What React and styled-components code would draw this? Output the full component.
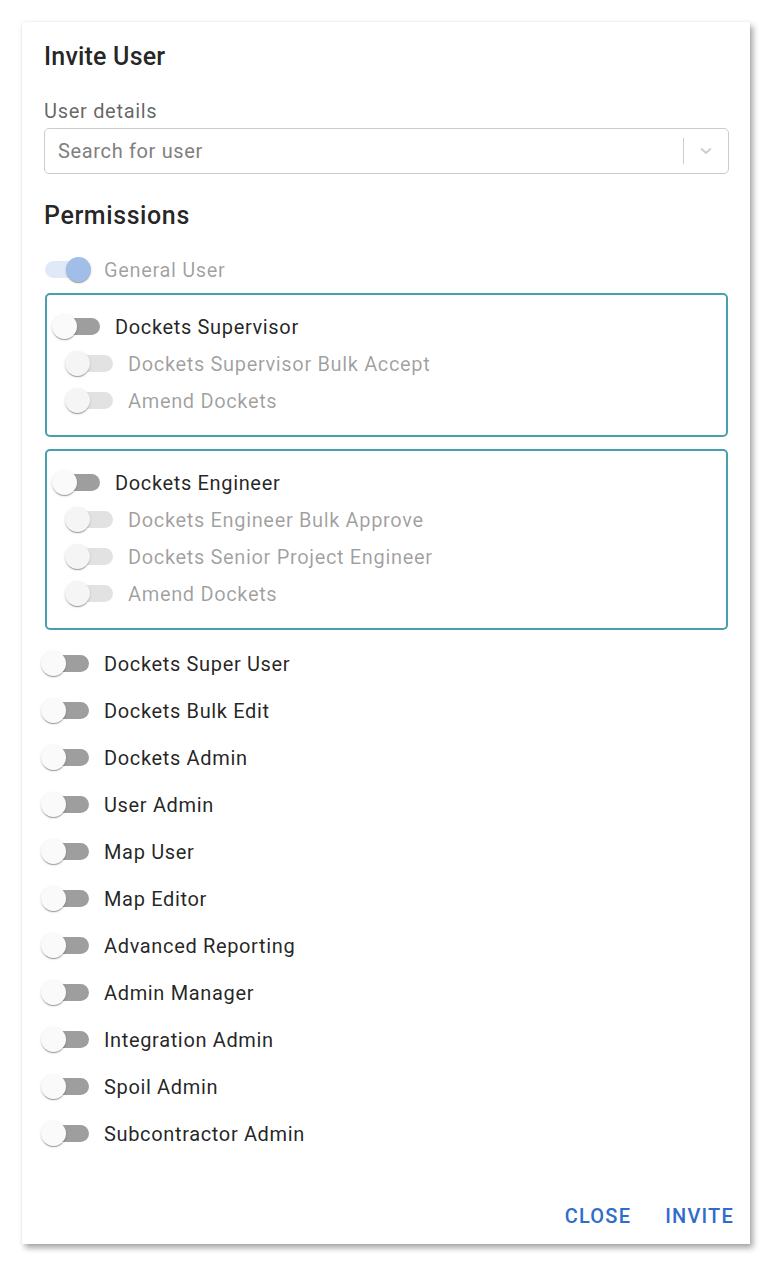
import React from 'react';
import styled, { createGlobalStyle } from 'styled-components';

// ----- style -----

const GlobalStyle = createGlobalStyle`
    body {
        margin: 0;
        background: #ffffff;
        font-family: Roboto, "Liberation Sans", Arial, sans-serif;
    }
`

const Page = styled.div`
    width: 782px;
    height: 1268px;
    padding: 22px 0 0 22px;
    box-sizing: border-box;
`
const Card = styled.div`
    width: 728px;
    height: 1222px;
    background: #ffffff;
    box-sizing: border-box;
    padding: 19px 21px 0 22px;
    display: flex;
    flex-direction: column;
    box-shadow: 0 0 2px rgba(0, 0, 0, 0.08), 3px 4px 6px rgba(0, 0, 0, 0.35);
`
const Title = styled.h2`
    margin: 0;
    font-size: 25px;
    line-height: 32px;
    font-weight: 500;
    letter-spacing: 0.2px;
    color: rgba(0, 0, 0, 0.87);
`
const FieldLabel = styled.div`
    margin-top: 26px;
    font-size: 20px;
    line-height: 24px;
    letter-spacing: 0.7px;
    color: rgba(0, 0, 0, 0.62);
`
const Select = styled.div`
    margin-top: 5px;
    height: 46px;
    box-sizing: border-box;
    border: 1px solid #cccccc;
    border-radius: 5px;
    display: flex;
    align-items: center;
`
const Placeholder = styled.div`
    flex: 1;
    padding-left: 13px;
    font-size: 20px;
    letter-spacing: 0.65px;
    color: #808080;
`
const Separator = styled.div`
    width: 1px;
    height: 26px;
    background: #cccccc;
`
const Chevron = styled.div`
    width: 44px;
    display: flex;
    justify-content: center;
    align-items: center;
`
const Section = styled.h2`
    margin: 26px 0 14px;
    font-size: 25px;
    line-height: 32px;
    font-weight: 500;
    letter-spacing: 0.6px;
    color: rgba(0, 0, 0, 0.87);
`
const Group = styled.div`
    margin: ${p => p.first ? '0' : '12px'} 1px 0;
    border: 2px solid #4a9fac;
    border-radius: 5px;
    padding: 13px 0 16px;
`
const Row = styled.div`
    display: flex;
    align-items: center;
    height: ${p => p.h || 47}px;
    margin-left: ${p => p.indent || 0}px;
    gap: 14px;
`
const Label = styled.span`
    font-size: 20px;
    letter-spacing: 0.65px;
    color: ${p => p.disabled ? 'rgba(0, 0, 0, 0.38)' : 'rgba(0, 0, 0, 0.87)'};
`
const Toggle = styled.span`
    position: relative;
    width: 49px;
    height: 25px;
    flex-shrink: 0;
`
const Track = styled.span`
    position: absolute;
    left: 4px;
    right: 1px;
    top: 4px;
    height: 17px;
    border-radius: 9px;
    background: ${p => p.checked ? '#dfe9f8' : p.disabled ? '#e2e2e2' : '#9e9e9e'};
`
const Thumb = styled.span`
    position: absolute;
    top: 0;
    left: ${p => p.checked ? 25 : 0}px;
    width: 25px;
    height: 25px;
    border-radius: 50%;
    background: ${p => p.checked ? '#a1bee8' : p.disabled ? '#f5f5f5' : '#fafafa'};
    box-shadow: 0 2px 1px -1px rgba(0,0,0,0.2), 0 1px 1px 0 rgba(0,0,0,0.14), 0 1px 3px 0 rgba(0,0,0,0.12);
`
const Footer = styled.div`
    margin-top: auto;
    margin-bottom: 6px;
    margin-right: -15px;
    display: flex;
    justify-content: flex-end;
    gap: 14px;
`
const TextButton = styled.button`
    border: none;
    background: none;
    padding: 10px 10px;
    font-family: inherit;
    font-size: 20px;
    font-weight: 500;
    letter-spacing: 1.2px;
    color: #2f6ccb;
    text-transform: uppercase;
    cursor: pointer;
`

// ----- component -----

const Switch = ({ checked, disabled }) => (
    <Toggle>
        <Track checked={checked} disabled={disabled} />
        <Thumb checked={checked} disabled={disabled} />
    </Toggle>
)

const Permission = ({ label, checked, disabled, indent = -3, h }) => (
    <Row indent={indent} h={h}>
        <Switch checked={checked} disabled={disabled} />
        <Label disabled={disabled}>{label}</Label>
    </Row>
)

const groups = [
    { main: 'Dockets Supervisor', subs: ['Dockets Supervisor Bulk Accept', 'Amend Dockets'] },
    { main: 'Dockets Engineer', subs: ['Dockets Engineer Bulk Approve', 'Dockets Senior Project Engineer', 'Amend Dockets'] },
]

const others = [
    'Dockets Super User', 'Dockets Bulk Edit', 'Dockets Admin', 'User Admin', 'Map User',
    'Map Editor', 'Advanced Reporting', 'Admin Manager', 'Integration Admin', 'Spoil Admin',
    'Subcontractor Admin',
]

export default function App() {
    return (
        <Page>
            <GlobalStyle />
            <Card>
                <Title>Invite User</Title>
                <FieldLabel>User details</FieldLabel>
                <Select>
                    <Placeholder>Search for user</Placeholder>
                    <Separator />
                    <Chevron>
                        <svg width="16" height="16" viewBox="0 0 20 20">
                            <path d="M4.5 7.5 L10 12.5 L15.5 7.5" fill="none" stroke="#cccccc" strokeWidth="2.2" strokeLinecap="round" strokeLinejoin="round" />
                        </svg>
                    </Chevron>
                </Select>
                <Section>Permissions</Section>
                <Permission label="General User" checked disabled />
                {groups.map((g, i) => (
                    <Group key={g.main} first={i === 0}>
                        <Permission label={g.main} indent={5} h={37} />
                        {g.subs.map(s => (
                            <Permission key={s} label={s} disabled indent={18} h={37} />
                        ))}
                    </Group>
                ))}
                <div style={{ height: 10 }} />
                {others.map(o => <Permission key={o} label={o} />)}
                <Footer>
                    <TextButton>Close</TextButton>
                    <TextButton>Invite</TextButton>
                </Footer>
            </Card>
        </Page>
    );
}
